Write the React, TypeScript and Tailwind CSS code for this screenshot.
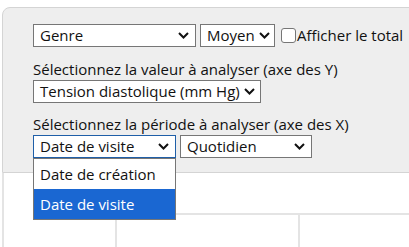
import React from "react";

function Chevron() {
  return (
    <svg width="11" height="7" viewBox="0 0 11 7" className="shrink-0">
      <path d="M1 1l4.5 4.5L10 1" fill="none" stroke="#111" strokeWidth="2" />
    </svg>
  );
}

function FakeSelect({ value, width, focused }: { value: string; width: string; focused?: boolean }) {
  return (
    <div
      className={`flex h-[23px] items-center justify-between gap-[4px] border bg-white pl-[6px] pr-[6px] ${width} ${
        focused ? "border-[#1f5fa8]" : "border-[#767676]"
      }`}
    >
      <span className="whitespace-nowrap leading-[21px]">{value}</span>
      <Chevron />
    </div>
  );
}

export default function App() {
  return (
    <div
      className="h-[247px] w-[409px] overflow-hidden bg-white text-[15px] text-[#111]"
      style={{ fontFamily: '"Open Sans", "Noto Sans", sans-serif' }}
    >
      <div className="ml-[2px] mt-[7px] w-[430px] rounded-tl-[8px] border border-[#d4d4d4] bg-[#eeeeee] pb-[14px] pl-[30px] pt-[16px]">
        <div className="mb-[11px] flex items-center">
          <FakeSelect value="Genre" width="w-[163px]" />
          <div className="ml-[4px]">
            <FakeSelect value="Moyen" width="w-[75px]" />
          </div>
          <div className="ml-[6px] h-[15px] w-[15px] rounded-[3px] border border-[#767676] bg-white" />
          <span className="ml-[1px] whitespace-nowrap leading-[21px]">Afficher le total</span>
        </div>

        <div className="leading-[22px]">Sélectionnez la valeur à analyser (axe des Y)</div>
        <FakeSelect value="Tension diastolique (mm Hg)" width="w-[228px]" />

        <div className="mt-[10px] leading-[22px]">Sélectionnez la période à analyser (axe des X)</div>
        <div className="flex">
          <div className="relative">
            <FakeSelect value="Date de visite" width="w-[143px]" focused />
            <div className="absolute left-0 top-full z-10 w-[143px] border border-[#767676] bg-white">
              <div className="flex h-[30px] items-center pl-[6px]">Date de création</div>
              <div className="flex h-[30px] items-center bg-[#1a67d2] pl-[6px] text-white">Date de visite</div>
            </div>
          </div>
          <div className="ml-[4px]">
            <FakeSelect value="Quotidien" width="w-[132px]" />
          </div>
        </div>
      </div>

      <div className="flex h-[74px]">
        <div className="ml-[2px] w-[113px] border-l-2 border-[#e4e4e4]" />
        <div className="flex flex-1 flex-col">
          <div className="h-[40px]" />
          <div className="flex flex-1 border-t-2 border-[#e4e4e4]">
            <div className="w-[183px] border-l-2 border-[#e4e4e4]" />
            <div className="flex-1 border-l-2 border-[#e4e4e4]" />
          </div>
        </div>
      </div>
    </div>
  );
}
